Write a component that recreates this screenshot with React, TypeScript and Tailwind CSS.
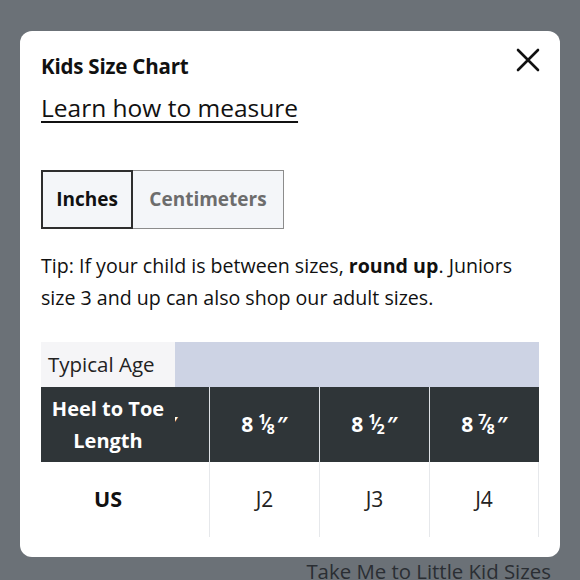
import { useLayoutEffect, useRef } from "react";

const sizes = [
  { whole: "7", num: "3", den: "4", us: "J1" },
  { whole: "8", num: "1", den: "8", us: "J2" },
  { whole: "8", num: "1", den: "2", us: "J3" },
  { whole: "8", num: "7", den: "8", us: "J4" },
];

function Fraction({ whole, num, den }: { whole: string; num: string; den: string }) {
  return (
    <span className="inline-flex items-start text-[21px] font-bold text-white leading-none">
      <span>{whole}</span>
      <span className="ml-[5px] text-[14px] relative -top-[2px]">{num}</span>
      <span className="text-[18px] -mx-[1px]">⁄</span>
      <span className="text-[14px] relative top-[8px]">{den}</span>
      <span className="ml-[2px]">″</span>
    </span>
  );
}

export default function App() {
  const scroller = useRef<HTMLDivElement>(null);

  useLayoutEffect(() => {
    if (scroller.current) scroller.current.scrollLeft = 9999;
  }, []);

  return (
    <div className="w-[580px] h-[580px] bg-[#6b7177] overflow-hidden pt-[31px] px-5 font-['Open_Sans',sans-serif]">
      <div className="bg-white rounded-xl h-[526px] px-[21px] pt-[21px] overflow-hidden">
        <div className="flex justify-between items-start">
          <p className="text-[20.5px] leading-[28px] font-bold text-[#111] tracking-[-0.2px]">Kids Size Chart</p>
          <button className="-mt-[5px] -mr-[2px]">
            <svg width="26" height="26" viewBox="0 0 26 26" fill="none" stroke="#111" strokeWidth="2.6" strokeLinecap="round">
              <path d="M3 3L23 23M23 3L3 23" />
            </svg>
          </button>
        </div>
        <a className="block mt-3 text-[24.5px] leading-[32px] text-[#111] underline underline-offset-[4px] decoration-[1.5px] w-max">
          Learn how to measure
        </a>

        <div className="flex mt-[46px] h-[59px]">
          <button className="w-[92px] h-full bg-[#f4f6f9] border-2 border-[#2e2e2e] text-[19px] font-bold text-[#111]">
            Inches
          </button>
          <button className="w-[151px] h-full bg-[#f4f6f9] border border-l-0 border-[#8c8c8c] text-[19px] font-bold text-[#6d6d6d]">
            Centimeters
          </button>
        </div>

        <p className="mt-[21px] text-[19.6px] leading-[32px] text-[#111]">
          Tip: If your child is between sizes, <b>round up</b>. Juniors size 3 and up can also shop our adult sizes.
        </p>

        <div
          ref={scroller}
          className="mt-[28px] w-[498px] overflow-x-auto [scrollbar-width:none]"
        >
          <div className="w-max">
            <div className="flex h-[45px]">
              <div className="sticky left-0 z-10 w-[134px] shrink-0 bg-[#f5f5f7] flex items-center pl-[7px] text-[20.5px] text-[#222]">
                Typical Age
              </div>
              {sizes.map((s) => (
                <div key={s.us} className="w-[110px] shrink-0 bg-[#cdd3e4]" />
              ))}
            </div>
            <div className="flex h-[75px] bg-[#2f3538]">
              <div className="sticky left-0 z-10 w-[134px] shrink-0 bg-[#2f3538] flex items-center justify-center text-center text-[20px] leading-[32px] font-bold text-white">
                Heel to Toe
                <br />
                Length
              </div>
              {sizes.map((s) => (
                <div
                  key={s.us}
                  className="w-[110px] shrink-0 border-l border-[#dfe2e6] flex items-center justify-center"
                >
                  <Fraction whole={s.whole} num={s.num} den={s.den} />
                </div>
              ))}
            </div>
            <div className="flex h-[75px] bg-white">
              <div className="sticky left-0 z-10 w-[134px] shrink-0 bg-white flex items-center justify-center text-[21.5px] font-bold text-[#111]">
                US
              </div>
              {sizes.map((s, i) => (
                <div
                  key={s.us}
                  className={
                    i === sizes.length - 1
                      ? "w-[110px] shrink-0 border-x border-[#e6e8eb] flex items-center justify-center text-[21px] text-[#222]"
                      : "w-[110px] shrink-0 border-l border-[#e6e8eb] flex items-center justify-center text-[21px] text-[#222]"
                  }
                >
                  {s.us}
                </div>
              ))}
            </div>
          </div>
        </div>
      </div>
      <div className="flex justify-end mr-[9px]">
        <a className="text-[20.4px] leading-[28px] text-[#2a2e33] underline underline-offset-[3px]">
          Take Me to Little Kid Sizes
        </a>
      </div>
    </div>
  );
}
